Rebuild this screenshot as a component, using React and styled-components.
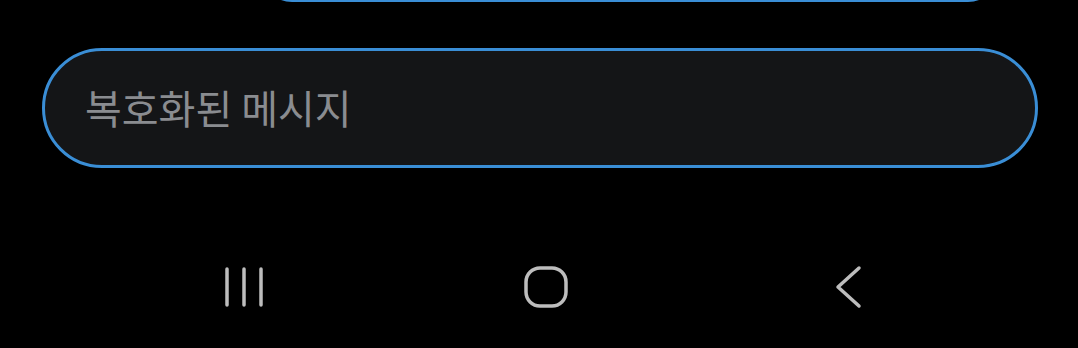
import React from "react";
import styled, { createGlobalStyle } from "styled-components";

const Global = createGlobalStyle`
  html, body { margin: 0; padding: 0; background: #000; }
  body { font-family: "Noto Sans CJK KR", "Noto Sans", sans-serif; }
  #root { width: 1078px; height: 348px; overflow: hidden; }
`;

const Screen = styled.div`
  width: 1078px;
  height: 348px;
  background: #000;
  display: flex;
  flex-direction: column;
  overflow: hidden;
`;

const PrevBubble = styled.div`
  margin: -58px 80px 0 262px;
  height: 60px;
  box-sizing: border-box;
  border: 3px solid #3a8ed6;
  border-radius: 30px;
  background: #141517;
  flex: none;
`;

const InputPill = styled.div`
  margin: 46px 40px 0 42px;
  height: 120px;
  box-sizing: border-box;
  border: 3px solid #3a8ed6;
  border-radius: 60px;
  background: #141517;
  display: flex;
  align-items: center;
  padding-left: 40px;
  flex: none;
`;

const Placeholder = styled.span`
  font-family: "Noto Sans CJK KR", sans-serif;
  font-size: 40px;
  font-weight: 400;
  color: #8a8c90;
  letter-spacing: 0px;
  line-height: 1;
  margin-top: -2px;
`;

const NavBar = styled.nav`
  margin-top: 98px;
  height: 42px;
  display: flex;
  justify-content: center;
  align-items: center;
  padding-left: 14px;
  gap: 200px;
`;

const NavButton = styled.div`
  width: 102px;
  display: flex;
  justify-content: center;
  align-items: center;
`;

const Icon = styled.svg`
  display: block;
  color: #bdbdbd;
`;

export default function App() {
  return (
    <>
      <Global />
      <Screen>
        <PrevBubble />
        <InputPill>
          <Placeholder>복호화된 메시지</Placeholder>
        </InputPill>
        <NavBar>
          <NavButton>
            <Icon width="40" height="42" viewBox="0 0 40 42">
              <g stroke="currentColor" strokeWidth="3.5" strokeLinecap="round">
                <line x1="3" y1="3" x2="3" y2="39" />
                <line x1="20" y1="3" x2="20" y2="39" />
                <line x1="37" y1="3" x2="37" y2="39" />
              </g>
            </Icon>
          </NavButton>
          <NavButton>
            <Icon width="44" height="42" viewBox="0 0 44 42">
              <rect x="2" y="2" width="40" height="38" rx="14" ry="14" fill="none" stroke="currentColor" strokeWidth="3.5" />
            </Icon>
          </NavButton>
          <NavButton>
            <Icon width="30" height="44" viewBox="0 0 30 44">
              <polyline points="26,3 5,22 26,41" fill="none" stroke="currentColor" strokeWidth="3.5" strokeLinecap="round" strokeLinejoin="round" />
            </Icon>
          </NavButton>
        </NavBar>
      </Screen>
    </>
  );
}
